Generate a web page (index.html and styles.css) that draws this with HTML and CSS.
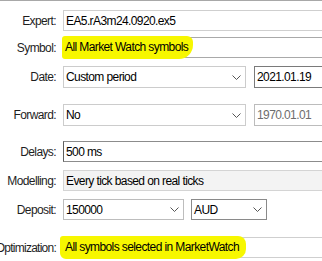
FILE: index.html
```html
<!DOCTYPE html>
<html>
<head>
<meta charset="utf-8">
<link rel="stylesheet" href="styles.css">
</head>
<body>
<div class="topline"></div>
<div class="form">
  <div class="row r-expert">
    <label class="lbl">Expert:</label>
    <div class="field box-light wide"><span class="txt">EA5.rA3m24.0920.ex5</span></div>
  </div>
  <div class="row r-symbol">
    <label class="lbl">Symbol:</label>
    <div class="field box-mid wide"><span class="txt mark mark-sym">All Market Watch symbols</span></div>
  </div>
  <div class="row r-date">
    <label class="lbl">Date:</label>
    <div class="field select sel-date"><span class="txt">Custom period</span>
      <svg class="chev" width="9" height="5" viewBox="0 0 9 5"><polyline points="0.5,0.5 4.5,4.5 8.5,0.5" fill="none" stroke="#555" stroke-width="1"/></svg>
    </div>
    <div class="field datebox dark wide"><span class="txt">2021.01.19</span></div>
  </div>
  <div class="row r-forward">
    <label class="lbl">Forward:</label>
    <div class="field select sel-date"><span class="txt">No</span>
      <svg class="chev" width="9" height="5" viewBox="0 0 9 5"><polyline points="0.5,0.5 4.5,4.5 8.5,0.5" fill="none" stroke="#555" stroke-width="1"/></svg>
    </div>
    <div class="field datebox disabled wide"><span class="txt">1970.01.01</span></div>
  </div>
  <div class="row r-delays">
    <label class="lbl">Delays:</label>
    <div class="field box-delay wide"><span class="txt">500 ms</span></div>
  </div>
  <div class="row r-model">
    <label class="lbl">Modelling:</label>
    <div class="field box-gray wide"><span class="txt">Every tick based on real ticks</span></div>
  </div>
  <div class="row r-deposit">
    <label class="lbl">Deposit:</label>
    <div class="field select sel-dep"><span class="txt">150000</span>
      <svg class="chev" width="9" height="5" viewBox="0 0 9 5"><polyline points="0.5,0.5 4.5,4.5 8.5,0.5" fill="none" stroke="#555" stroke-width="1"/></svg>
    </div>
    <div class="field select sel-aud"><span class="txt">AUD</span>
      <svg class="chev" width="9" height="5" viewBox="0 0 9 5"><polyline points="0.5,0.5 4.5,4.5 8.5,0.5" fill="none" stroke="#555" stroke-width="1"/></svg>
    </div>
  </div>
  <div class="row r-opt">
    <label class="lbl lbl-tight">Optimization:</label>
    <div class="field box-light wide"><span class="txt mark mark-opt">All symbols selected in MarketWatch</span></div>
  </div>
</div>
</body>
</html>
```
FILE: styles.css
```css
html, body {
  margin: 0;
  padding: 0;
  background: #ffffff;
  overflow: hidden;
}
body {
  width: 322px;
  height: 261px;
  font-family: "Liberation Sans", Arial, sans-serif;
  font-size: 12px;
  letter-spacing: -0.6px;
  color: #000;
}
.topline {
  height: 1px;
  background: #a8a8a8;
}
.form {
  display: flex;
  flex-direction: column;
  width: 360px;
  padding-top: 9px;
}
.row {
  display: flex;
  align-items: center;
  height: 21px;
}
.r-symbol { margin-top: 6px; }
.r-date { margin-top: 8px; height: 22px; }
.r-forward { margin-top: 16px; height: 22px; }
.r-delays { margin-top: 15px; }
.r-model { margin-top: 8px; }
.r-deposit { margin-top: 8px; }
.r-opt { margin-top: 17px; }

.lbl {
  width: 56px;
  margin-right: 7px;
  text-align: right;
  color: #1e1e1e;
  white-space: nowrap;
  flex: none;
  display: flex;
  justify-content: flex-end;
}
.lbl-tight { letter-spacing: -0.75px; }
.field {
  box-sizing: border-box;
  height: 100%;
  display: flex;
  align-items: center;
  padding-left: 2px;
  background: #fff;
  position: relative;
  white-space: nowrap;
}
.wide { flex: 1; }
.txt { line-height: 14px; }

.box-light { border: 1px solid #cfcfcf; }
.box-mid { border: 1px solid #a9a9a9; }
.box-delay {
  border: 1px solid #8c8c8c;
  border-left-color: #5f5f5f;
}
.box-gray {
  border: 1px solid #d4d4d4;
  background: #f3f3f3;
}

.select {
  border: 1px solid #cccccc;
  justify-content: space-between;
  padding-right: 4px;
}
.sel-date { width: 183px; }
.sel-dep { width: 121px; border-color: #bdbdbd; }
.sel-aud { width: 76px; margin-left: 7px; border-color: #8a8a8a; }
.chev { flex: none; }

.datebox { margin-left: 8px; }
.dark { border: 1px solid #7a7a7a; }
.disabled { border: 1px solid #bcbcbc; color: #6d6d6d; }

.mark {
  background: #f7f700;
  margin-left: -4px;
  padding: 4px 5px 5px 3px;
}
.mark-sym {
  border-radius: 3px 6px 14px 3px;
}
.mark-opt {
  margin-left: -6px;
  padding-left: 5px;
  padding-right: 7px;
  border-radius: 3px 8px 10px 6px;
}
```
